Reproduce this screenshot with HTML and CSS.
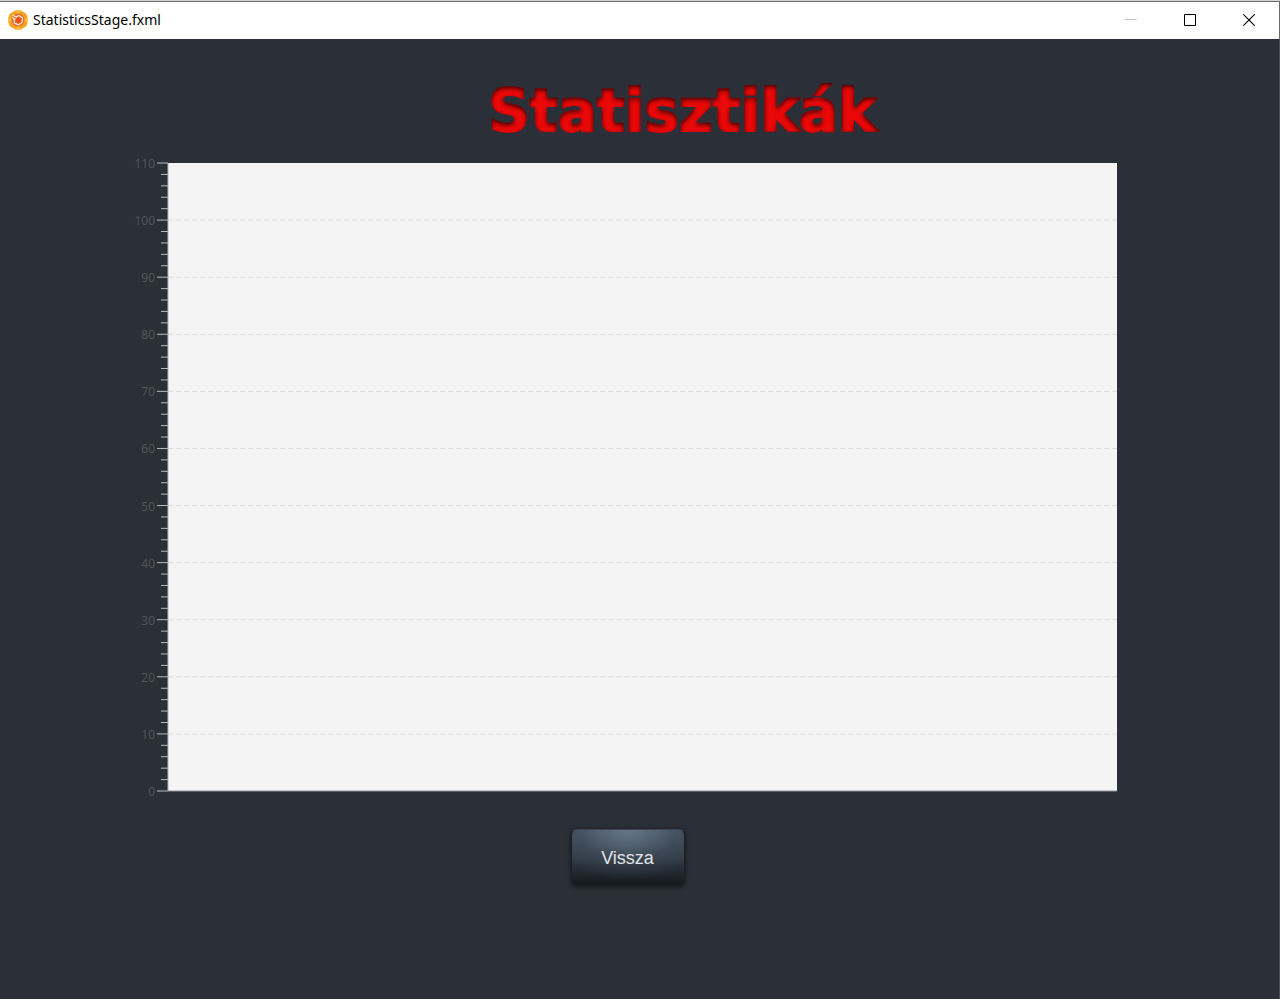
FILE: index.html
```html
<!DOCTYPE html>
<html lang="hu">
<head>
<meta charset="utf-8">
<title>StatisticsStage.fxml</title>
<link rel="stylesheet" href="styles.css">
</head>
<body>
<header class="titlebar">
  <svg class="app-icon" viewBox="0 0 20 20" aria-hidden="true">
    <path d="M7 .8Q10-.7 13 .8L17 3Q19 4 19.4 7L20 10L19.4 13Q19 16 17 17L13 19.200Q10 20.700 7 19.200L3 17Q1 16 .6 13L0 10L.6 7Q1 4 3 3Z" fill="#f6a21d"/>
    <path d="M7 .8Q10-.7 13 .8L10 4ZM7 19.200Q10 20.700 13 19.200L10 16ZM0 10L.6 7L4 10L.6 13ZM20 10L19.400 7L16 10L19.400 13Z" fill="#fbc04a"/>
    <circle cx="10" cy="10" r="6.500" fill="#ed6a2c"/>
    <path d="M4.500 5L8 7L11 5.500L14.500 8L14 12.500L10.500 14.800L6.500 13L6 9M4 7.500L7.500 9.500" fill="none" stroke="#fff0dc" stroke-width="1.200"/>
    <circle cx="10.500" cy="10.200" r="2.800" fill="#f0501f"/>
  </svg>
  <span class="titlebar-name">StatisticsStage.fxml</span>
  <div class="window-controls">
    <button class="window-button" type="button" aria-label="Minimize" disabled><svg viewBox="0 0 12 12"><path d="M0 5.500H12" stroke="#c6c6c6"/></svg></button>
    <button class="window-button" type="button" aria-label="Maximize"><svg viewBox="0 0 12 12"><path d="M.5.5H11.500V11.500H.5Z" stroke="#000"/></svg></button>
    <button class="window-button" type="button" aria-label="Close"><svg viewBox="0 0 12 12"><path d="M.3.3L11.700 11.700M11.700.3L.3 11.700" stroke="#000" stroke-width="1.100"/></svg></button>
  </div>
</header>
<main class="stage">
  <h1 class="heading">Statisztikák</h1>
  <svg class="chart" id="chart" role="img" aria-label="Statisztikák"></svg>
  <button class="back-button" type="button">Vissza</button>
</main>
<svg class="filters" aria-hidden="true">
  <filter id="inner-shadow" x="-5%" y="-5%" width="110%" height="110%" color-interpolation-filters="sRGB">
    <feComponentTransfer in="SourceAlpha" result="inverse"><feFuncA type="linear" slope="-1" intercept="1"/></feComponentTransfer>
    <feGaussianBlur in="inverse" stdDeviation="2" result="blurred"/>
    <feOffset in="blurred" dy="2" result="moved"/>
    <feComponentTransfer in="moved" result="soft"><feFuncA type="linear" slope="0.75"/></feComponentTransfer>
    <feComposite in="soft" in2="SourceAlpha" operator="in" result="shade"/>
    <feMerge><feMergeNode in="SourceGraphic"/><feMergeNode in="shade"/></feMerge>
  </filter>
</svg>
<script src="chart.js"></script>
</body>
</html>
```

FILE: styles.css
```css
* { box-sizing: border-box; }

body {
  display: flex;
  flex-direction: column;
  min-height: 100vh;
  margin: 0;
  border-top: 1px solid #d4d4d4;
  background: #2b2f37;
  font-family: "Open Sans", "Noto Sans", sans-serif;
}

.titlebar {
  display: flex;
  align-items: center;
  gap: 5px;
  height: 38px;
  padding: 0 1px 2px 8px;
  border-top: 1px solid #6b6b6b;
  border-right: 1px solid #6b6b6b;
  background: #fff;
}

.app-icon { width: 20px; height: 20px; }

.titlebar-name {
  color: #000;
  font-family: "Noto Sans", sans-serif;
  font-size: 14px;
  line-height: 20px;
}

.window-controls {
  display: flex;
  height: 100%;
  margin-left: auto;
}

.window-button {
  display: grid;
  place-items: center;
  width: 59px;
  padding: 0;
  border: 0;
  background: none;
}

.window-button svg { width: 12px; height: 12px; fill: none; }

.stage {
  display: flex;
  flex: 1;
  flex-direction: column;
  padding: 37px 162px 0 128px;
  border-right: 1px solid #4b4e55;
}

.heading {
  margin: 0 0 12px 120px;
  color: #ea0808;
  filter: url(#inner-shadow);
  font-family: "DejaVu Sans", sans-serif;
  font-size: 58px;
  font-weight: 700;
  line-height: 70px;
  text-align: center;
  -webkit-text-stroke: 2px #ea0808;
}

.chart {
  width: 100%;
  height: 628px;
  margin: 5px 0 38px;
  overflow: visible;
}

.plot { fill: #f4f4f4; }
.grid-line { stroke: #dadada; stroke-dasharray: 5 3; }
.tick { stroke: #b8babf; stroke-width: 1; }
.axis-line { stroke: #b4b6bb; }
.base-line { stroke: #909297; }

.tick-label {
  fill: #55575c;
  font-size: 12px;
  text-anchor: end;
}

.back-button {
  width: 114px;
  height: 57px;
  margin-left: calc(50% - 52px);
  padding-top: 2px;
  border: 1px solid #1b2027;
  border-top-color: #3c4652;
  border-radius: 6px;
  background:
    radial-gradient(ellipse 75% 90% at 50% 0, #66778a 0%, rgba(70, 84, 98, 0.4) 60%, transparent 100%),
    linear-gradient(#46515f, #303b46 50%, #15191e);
  box-shadow: 0 1px 4px rgba(0, 0, 0, 0.6);
  color: #e3e5e8;
  font-family: "Liberation Sans", Arial, sans-serif;
  font-size: 18px;
}

.filters { position: absolute; width: 0; height: 0; }
```

FILE: chart.js
```js
const chart = document.getElementById("chart");
const axisX = 40;
const maximum = 110;

function add(name, attributes, text) {
  const node = document.createElementNS("http://www.w3.org/2000/svg", name);
  for (const key in attributes) node.setAttribute(key, attributes[key]);
  if (text !== undefined) node.textContent = text;
  chart.appendChild(node);
}

add("rect", { class: "plot", x: axisX, y: 0, height: "100%", style: "width: calc(100% - 40px)" });
for (let value = 0; value <= maximum; value += 2) {
  const y = (100 - value / maximum * 100) + "%";
  const major = value % 10 === 0;
  add("line", { class: "tick", x1: major ? 29 : 33, x2: axisX, y1: y, y2: y });
  if (major) {
    if (value > 0 && value < maximum) add("line", { class: "grid-line", x1: axisX, x2: "100%", y1: y, y2: y });
    add("text", { class: "tick-label", x: 27, y: y, dy: 5 }, value);
  }
}
add("line", { class: "axis-line", x1: axisX, x2: axisX, y1: 0, y2: "100%" });
add("line", { class: "base-line", x1: axisX, x2: "100%", y1: "100%", y2: "100%" });
```
